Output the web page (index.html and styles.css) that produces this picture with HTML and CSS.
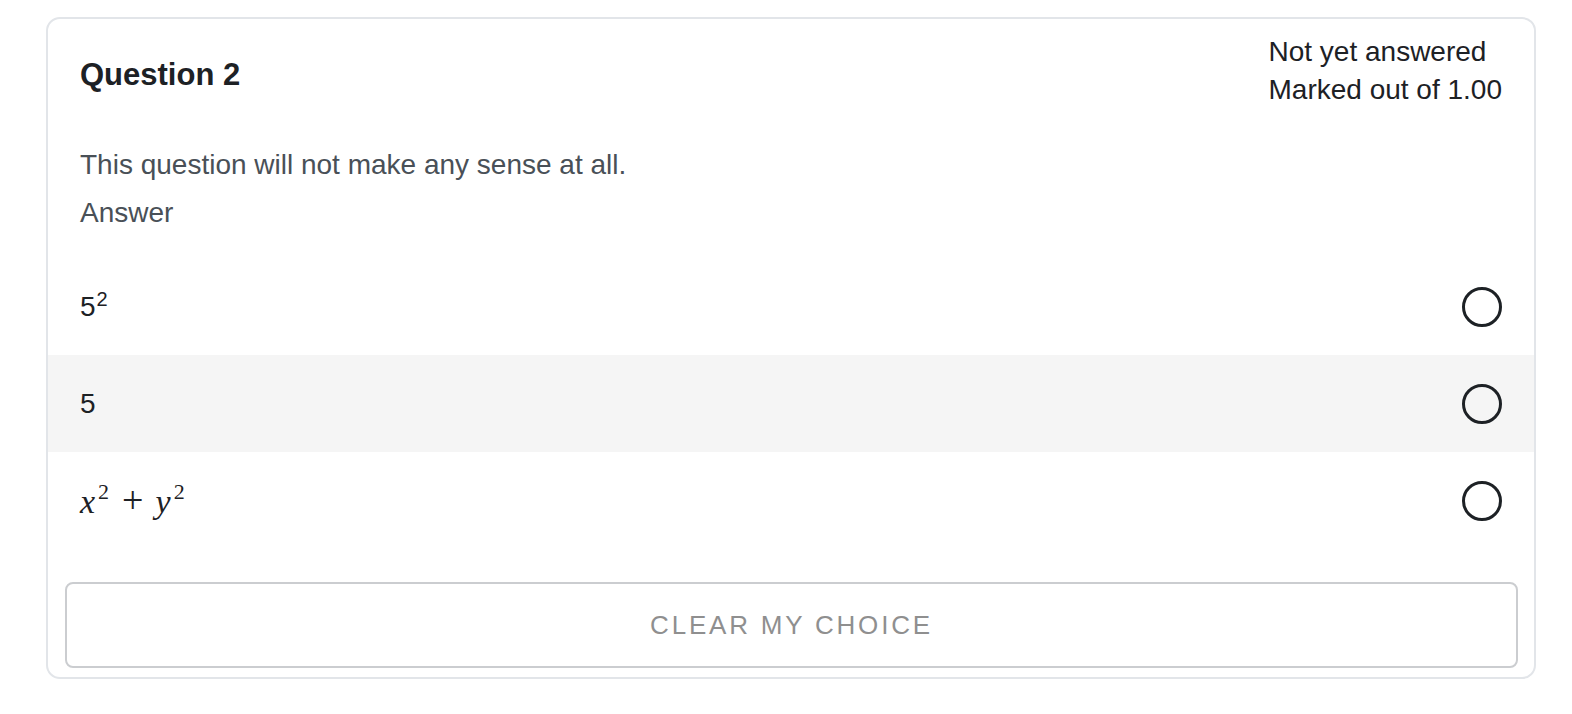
FILE: index.html
```html
<!DOCTYPE html>
<html lang="en">
<head>
<meta charset="utf-8">
<title>Question 2</title>
<link rel="stylesheet" href="styles.css">
</head>
<body>
<div class="card">
  <div class="head">
    <h3 class="qno">Question 2</h3>
    <div class="info">
      <div>Not yet answered</div>
      <div>Marked out of 1.00</div>
    </div>
  </div>
  <div class="qtext">This question will not make any sense at all.</div>
  <div class="prompt">Answer</div>
  <div class="options">
    <label class="opt">
      <span class="otext">5<sup class="sup">2</sup></span>
      <span class="radio"></span>
    </label>
    <label class="opt alt">
      <span class="otext">5</span>
      <span class="radio"></span>
    </label>
    <label class="opt">
      <span class="otext math"><i class="mi">x</i><sup class="msup">2</sup><span class="mo">+</span><i class="mi">y</i><sup class="msup">2</sup></span>
      <span class="radio"></span>
    </label>
  </div>
  <div class="actions">
    <button class="clear" type="button">CLEAR MY CHOICE</button>
  </div>
</div>
</body>
</html>
```

FILE: styles.css
```css
html, body {
  margin: 0;
  padding: 0;
  background: #ffffff;
}
body {
  font-family: "Liberation Sans", Arial, sans-serif;
  color: #1d2125;
}
.card {
  box-sizing: border-box;
  margin: 17px 36px 0 46px;
  border: 2px solid #e2e5e9;
  border-radius: 14px;
  padding-bottom: 9px;
}
.head {
  display: flex;
  justify-content: space-between;
  align-items: flex-start;
  padding: 14px 32px 0 32px;
}
.qno {
  margin: 23px 0 0 0;
  font-size: 31px;
  line-height: 38px;
  font-weight: bold;
  color: #1d2125;
}
.info {
  font-size: 28px;
  line-height: 38px;
  color: #1d2125;
}
.qtext {
  margin-top: 32px;
  padding: 0 32px;
  font-size: 28px;
  line-height: 48px;
  color: #495057;
}
.prompt {
  padding: 0 32px;
  font-size: 28px;
  line-height: 48px;
  color: #495057;
}
.options {
  margin-top: 21px;
  display: flex;
  flex-direction: column;
}
.opt {
  display: flex;
  align-items: center;
  justify-content: space-between;
  height: 97px;
  padding: 0 32px;
}
.opt.alt {
  background: #f5f5f5;
}
.otext {
  font-size: 28px;
  line-height: 40px;
  color: #1d2125;
}
.sup {
  font-size: 20px;
  vertical-align: 10px;
  line-height: 0;
  margin-left: 1px;
}
.math {
  font-family: "Liberation Serif", "Times New Roman", serif;
  font-size: 34px;
}
.mi {
  font-style: italic;
}
.msup {
  font-size: 22px;
  vertical-align: 14px;
  line-height: 0;
  margin-left: 3px;
}
.mo {
  font-size: 38px;
  font-weight: 300;
  margin: 0 12px 0 13px;
}
.radio {
  box-sizing: border-box;
  width: 40px;
  height: 40px;
  border: 3.5px solid #1d2125;
  border-radius: 50%;
  background: #ffffff;
}
.opt.alt .radio {
  background: #f5f5f5;
}
.actions {
  margin-top: 33px;
  padding: 0 16px 0 17px;
}
.clear {
  display: block;
  box-sizing: border-box;
  width: 100%;
  height: 86px;
  border: 2px solid #cbcdd0;
  border-radius: 8px;
  background: #ffffff;
  font-family: "Liberation Sans", Arial, sans-serif;
  font-size: 26px;
  letter-spacing: 2.8px;
  color: #8f8f8f;
  padding: 0;
}
```
